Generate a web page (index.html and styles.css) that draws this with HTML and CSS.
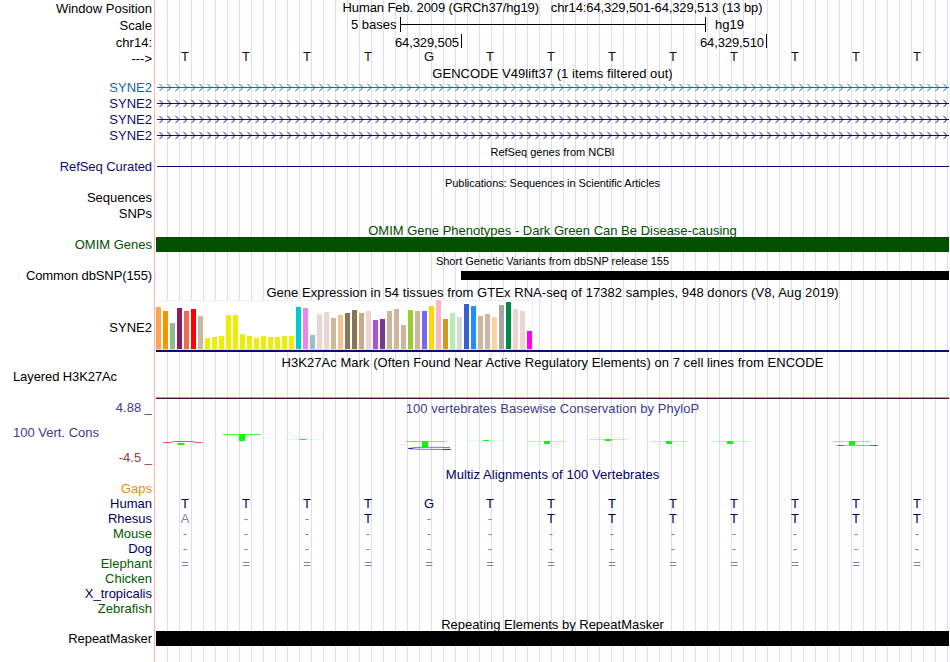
FILE: index.html
```
<!DOCTYPE html>
<html lang="en">
<head>
<meta charset="utf-8">
<title>Genome Browser chr14:64,329,501-64,329,513</title>
<link rel="stylesheet" href="styles.css">
</head>
<body>
<main class="browser">
  <div class="labels">
    <div class="l-position">Window Position</div>
    <div class="l-scale">Scale</div>
    <div class="l-chrom">chr14:</div>
    <div class="l-strand">---&gt;</div>
    <div class="l-gene light-blue">SYNE2</div>
    <div class="l-row navy">SYNE2</div>
    <div class="l-row navy">SYNE2</div>
    <div class="l-row navy">SYNE2</div>
    <div class="l-refseq navy">RefSeq Curated</div>
    <div class="l-pubs">Sequences</div>
    <div class="l-row">SNPs</div>
    <div class="l-omim omim">OMIM Genes</div>
    <div class="l-snp">Common dbSNP(155)</div>
    <div class="l-gtex">SYNE2</div>
    <div class="l-h3k">Layered H3K27Ac</div>
    <div class="l-max cons">4.88 _</div>
    <div class="l-cons cons">100 Vert. Cons</div>
    <div class="l-min neg">-4.5 _</div>
    <div class="l-gaps orange">Gaps</div>
    <div class="species-a">Human</div>
    <div class="species-a">Rhesus</div>
    <div class="species-b">Mouse</div>
    <div class="species-a">Dog</div>
    <div class="species-b">Elephant</div>
    <div class="species-b">Chicken</div>
    <div class="species-a">X_tropicalis</div>
    <div class="species-b">Zebrafish</div>
    <div class="l-repeat">RepeatMasker</div>
  </div>
  <div class="tracks">
    <div class="title t-position"><span>Human Feb. 2009 (GRCh37/hg19)</span><span>chr14:64,329,501-64,329,513 (13 bp)</span></div>
    <div class="scale"><span class="scale-len">5 bases</span><span class="scale-bar"></span><span>hg19</span></div>
    <div class="ticks"><span class="tick">64,329,505</span><span class="tick">64,329,510</span></div>
    <div class="bases ruler" data-seq="TTTTGTTTTTTTT"></div>
    <div class="title t-gencode"><span>GENCODE V49lift37 (1 items filtered out)</span></div>
    <svg class="genes" width="793" height="64">
      <defs>
        <pattern id="arrowLight" width="8" height="16" patternUnits="userSpaceOnUse"><path class="arrow-light" d="M3.5 4L7 7.5L3.5 11"/></pattern>
        <pattern id="arrowNavy" width="8" height="16" patternUnits="userSpaceOnUse"><path class="arrow-navy" d="M3.5 4L7 7.5L3.5 11"/></pattern>
      </defs>
      <rect x="1" width="792" height="16" fill="url(#arrowLight)"/>
      <rect x="1" y="16" width="792" height="48" fill="url(#arrowNavy)"/>
      <path class="arrow-light" d="M1 7.5h792"/>
      <path class="arrow-navy" d="M1 23.5h792M1 39.5h792M1 55.5h792"/>
    </svg>
    <div class="title small t-refseq"><span>RefSeq genes from NCBI</span></div>
    <div class="refseq-line"></div>
    <div class="title small t-pubs"><span>Publications: Sequences in Scientific Articles</span></div>
    <div class="title t-omim omim"><span>OMIM Gene Phenotypes - Dark Green Can Be Disease-causing</span></div>
    <div class="omim-bar"></div>
    <div class="title small t-snp"><span>Short Genetic Variants from dbSNP release 155</span></div>
    <div class="snp-bar"></div>
    <div class="title t-gtex"><span>Gene Expression in 54 tissues from GTEx RNA-seq of 17382 samples, 948 donors (V8, Aug 2019)</span></div>
    <div class="gtex" id="gtex"></div>
    <div class="gene-model"></div>
    <div class="title t-h3k"><span>H3K27Ac Mark (Often Found Near Active Regulatory Elements) on 7 cell lines from ENCODE</span></div>
    <div class="h3k-signal"></div>
    <div class="title t-phylop cons"><span>100 vertebrates Basewise Conservation by PhyloP</span></div>
    <svg class="phylop" width="793" height="20" viewBox="0 432 793 20">
      <g fill="#0f0">
        <path d="M22 443h6v2h-6zM83 434h6v7h-6zM144 439h6v1h-6zM266 441h6v6h-6zM327 440h6v1h-6zM388 441h6v3h-6zM449 439h6v2h-6zM510 441h6v3h-6zM571 441h6v3h-6zM693 441h6v4h-6z"/>
        <path opacity=".75" d="M67 434h38v1H67z"/>
        <path opacity=".65" d="M250 441h38v1h-38z"/>
        <path opacity=".45" d="M677 441h38v1h-38z"/>
        <path opacity=".3" d="M372 441h38v1h-38zM433 439h38v1h-38zM494 441h38v1h-38zM555 441h38v1h-38z"/>
        <path opacity=".13" d="M6 443h39v1H6zM128 439h38v1h-38zM311 440h38v1h-38z"/>
      </g>
      <path d="M7 442.6Q16 442.6 18 441.5H36Q38 442.6 46 442.6" fill="none" stroke="#f22" stroke-width=".8"/>
      <path d="M294 447.6Q288 447.2 262 447.3Q252 448.3 253 448.6Q258 449.5 294 449.4" fill="none" stroke="#22f" stroke-width=".65"/>
      <path d="M252 448h5v1h-5zM287 449h8v1h-8z" fill="#00f" opacity=".7"/>
      <path d="M680 445h42v1h-42z" fill="#00f" opacity=".35"/>
      <path d="M682 445h6v1h-6zM714 445h8v1h-8z" fill="#00f" opacity=".45"/>
    </svg>
    <div class="title t-multiz"><span>Multiz Alignments of 100 Vertebrates</span></div>
    <div class="alignment">
      <div class="bases" data-seq="TTTTGTTTTTTTT"></div>
      <div class="bases" data-seq="a--T--TTTTTTT"></div>
      <div class="bases" data-seq="-------------"></div>
      <div class="bases" data-seq="-------------"></div>
      <div class="bases" data-seq="============="></div>
    </div>
    <div class="title t-repeat"><span>Repeating Elements by RepeatMasker</span></div>
    <div class="repeat-bar"></div>
  </div>
</main>
<script src="app.js"></script>
</body>
</html>
```
FILE: styles.css
```
body { margin: 0; background: #fff; }
.browser {
  display: flex;
  width: 949px;
  height: 662px;
  overflow: hidden;
  font: 13px/15px "Liberation Sans", Arial, sans-serif;
  color: #000;
  white-space: nowrap;
}
.labels {
  box-sizing: border-box;
  width: 154px;
  flex: none;
  padding: 1px 2px 0 0;
  text-align: right;
}
.tracks {
  box-sizing: border-box;
  width: 795px;
  height: 662px;
  flex: none;
  border-left: 1px solid #ffb4b4;
  padding-left: 1px;
  background: linear-gradient(90deg, transparent 11px, #dcdcf5 11px) 0 0 / 12px 100% content-box;
}
.l-scale, .l-chrom { margin-top: 2px; }
.l-strand { margin-top: 1px; }
.l-gene { margin-top: 14px; }
.l-row { margin-top: 1px; }
.l-refseq, .l-pubs, .l-omim, .l-snp { margin-top: 16px; }
.l-refseq { letter-spacing: -.07px; }
.l-snp { letter-spacing: -.11px; }
.l-gtex { margin-top: 37px; }
.l-h3k { margin-top: 34px; padding-right: 35px; letter-spacing: -.1px; }
.l-max { margin-top: 16px; }
.l-cons { margin-top: 10px; padding-right: 53px; }
.l-min { margin-top: 10px; }
.l-gaps { margin-top: 16px; }
.l-repeat { margin-top: 15px; letter-spacing: -.07px; }
.light-blue { color: #0c6caa; }
.navy { color: #0c0c78; }
.omim { color: #005000; }
.cons { color: #3c3c8c; }
.neg { color: #8c3c3c; }
.orange { color: #eb8c0a; }
.species-a { color: #000064; }
.species-b { color: #005a00; }

.title { height: 15px; text-align: center; }
.small { font-size: 11px; }
.t-position { display: flex; justify-content: center; gap: 12px; letter-spacing: -.11px; }
.scale { display: flex; align-items: flex-start; margin-top: 2px; height: 17px; padding-left: 195px; }
.scale-len { width: 49px; }
.scale-bar {
  width: 304px;
  height: 15px;
  border: solid #000;
  border-width: 0 1px;
  margin-right: 9px;
  background: linear-gradient(#000, #000) 0 7px / 100% 1px no-repeat;
}
.ticks { display: flex; height: 15px; }
.tick {
  box-sizing: border-box;
  width: 305px;
  height: 14px;
  border-right: 1px solid #000;
  padding-right: 2px;
  line-height: 17px;
  letter-spacing: -.1px;
  text-align: right;
}
.tick:first-child { width: 306px; }
.bases { display: grid; grid-template-columns: repeat(13, 61px); height: 15px; margin-left: -1.5px; text-align: center; color: #000064; }
.ruler { color: #111; }
.faded { color: #8080b0; }
.t-gencode { margin-top: 2px; letter-spacing: .05px; }
.genes { display: block; margin-top: -1px; }
.arrow-light { fill: none; stroke: #0c6caa; }
.arrow-navy { fill: none; stroke: #0c0c78; }
.t-refseq { margin-top: 1px; }
.refseq-line { height: 1px; margin: 6px 0 0 1px; background: #0c0c78; }
.t-pubs { margin-top: 9px; letter-spacing: -.06px; }
.t-omim { height: 14px; margin-top: 32px; }
.omim-bar { height: 15px; background: #005000; }
.t-snp { margin-top: 2px; }
.snp-bar { height: 9px; margin: 2px 0 0 305px; background: #000; }
.t-gtex { margin-top: 5px; letter-spacing: .055px; }
.gtex {
  box-sizing: border-box;
  display: flex;
  align-items: flex-end;
  gap: 2px;
  width: 377px;
  height: 50px;
  border-top: 1px solid #f0f0f0;
  border-right: 1px solid #f0f0f0;
  border-bottom: 1px solid #dcdcdc;
  background: #fff;
}
.gtex i { flex: none; width: 5px; }
.gene-model { height: 2px; background: #0c0c78; }
.t-h3k { margin-top: 3px; letter-spacing: .05px; }
.h3k-signal { height: 1px; margin-top: 27px; background: #ff7878; border-bottom: 1px solid #501432; }
.t-phylop { margin-top: 2px; letter-spacing: .03px; }
.phylop { display: block; margin-top: 16px; }
.t-multiz { margin-top: 15px; letter-spacing: .07px; color: #000064; }
.alignment { margin-top: 14px; }
.t-repeat { height: 14px; margin-top: 46px; }
.repeat-bar { height: 15px; background: #000; }
```
FILE: app.js
```
// One grid cell per base; lowercase letters and gap marks are drawn faded.
document.querySelectorAll('.bases').forEach(function (row) {
  row.dataset.seq.split('').forEach(function (base) {
    var cell = document.createElement('span');
    cell.textContent = base.toUpperCase();
    if (/[a-z=-]/.test(base)) cell.className = 'faded';
    row.appendChild(cell);
  });
});

// Median expression per tissue: [bar height, tissue colour].
var tissues = [
  [42,'#ffa54f'],[38,'#ee9a00'],[26,'#8fbc8f'],[41,'#8b1c62'],[38,'#ee6a50'],[40,'#ff0000'],[33,'#cdb79e'],
  [11,'#eeee00'],[12,'#eeee00'],[13,'#eeee00'],[34,'#eeee00'],[34,'#eeee00'],[15,'#eeee00'],[13,'#eeee00'],
  [11,'#eeee00'],[13,'#eeee00'],[12,'#eeee00'],[12,'#eeee00'],[13,'#eeee00'],[13,'#eeee00'],
  [42,'#00cdcd'],[41,'#ee82ee'],[14,'#9ac0cd'],[35,'#eed5d2'],[37,'#eed5d2'],[31,'#cdb79e'],[34,'#eec591'],
  [36,'#8b7355'],[39,'#8b7355'],[36,'#cdaa7d'],[38,'#eed5d2'],[29,'#b452cd'],[30,'#7a378b'],[38,'#cdb79e'],
  [40,'#cdb79e'],[24,'#cdb79e'],[39,'#9acd32'],[38,'#cdb79e'],[38,'#7a67ee'],[43,'#ffd700'],[49,'#ffb6c1'],
  [30,'#cd9b1d'],[36,'#b4eeb4'],[32,'#d9d9d9'],[45,'#3a5fcd'],[43,'#1e90ff'],[33,'#cdb79e'],[35,'#cdb79e'],
  [32,'#ffd39b'],[44,'#a6a6a6'],[47,'#008b45'],[40,'#eed5d2'],[38,'#eed5d2'],[18,'#ff00ff']
];
tissues.forEach(function (t) {
  var bar = document.createElement('i');
  bar.style.height = t[0] + 'px';
  bar.style.background = t[1];
  document.getElementById('gtex').appendChild(bar);
});
```
